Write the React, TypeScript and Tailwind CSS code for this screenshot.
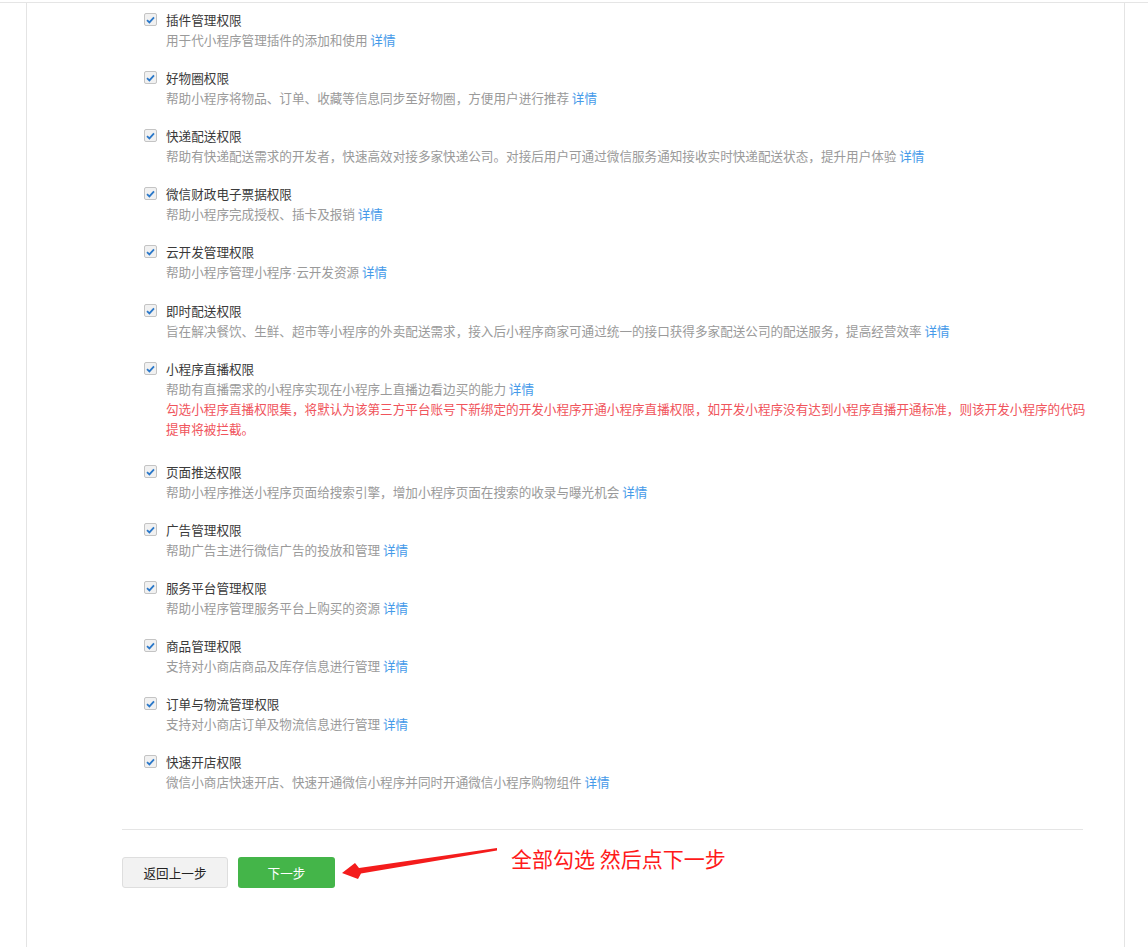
const perms: { title: string; desc: React.ReactNode; warn?: string }[] = [
  { title: "插件管理权限", desc: "用于代小程序管理插件的添加和使用" },
  { title: "好物圈权限", desc: "帮助小程序将物品、订单、收藏等信息同步至好物圈，方便用户进行推荐" },
  {
    title: "快递配送权限",
    desc: "帮助有快递配送需求的开发者，快速高效对接多家快递公司。对接后用户可通过微信服务通知接收实时快递配送状态，提升用户体验",
  },
  { title: "微信财政电子票据权限", desc: "帮助小程序完成授权、插卡及报销" },
  {
    title: "云开发管理权限",
    desc: (
      <>
        帮助小程序管理小程序<span style={{ fontFamily: '"Liberation Sans", sans-serif' }}>·</span>云开发资源
      </>
    ),
  },
  {
    title: "即时配送权限",
    desc: "旨在解决餐饮、生鲜、超市等小程序的外卖配送需求，接入后小程序商家可通过统一的接口获得多家配送公司的配送服务，提高经营效率",
  },
  {
    title: "小程序直播权限",
    desc: "帮助有直播需求的小程序实现在小程序上直播边看边买的能力",
    warn: "勾选小程序直播权限集，将默认为该第三方平台账号下新绑定的开发小程序开通小程序直播权限，如开发小程序没有达到小程序直播开通标准，则该开发小程序的代码提审将被拦截。",
  },
  { title: "页面推送权限", desc: "帮助小程序推送小程序页面给搜索引擎，增加小程序页面在搜索的收录与曝光机会" },
  { title: "广告管理权限", desc: "帮助广告主进行微信广告的投放和管理" },
  { title: "服务平台管理权限", desc: "帮助小程序管理服务平台上购买的资源" },
  { title: "商品管理权限", desc: "支持对小商店商品及库存信息进行管理" },
  { title: "订单与物流管理权限", desc: "支持对小商店订单及物流信息进行管理" },
  { title: "快速开店权限", desc: "微信小商店快速开店、快速开通微信小程序并同时开通微信小程序购物组件" },
];

function Checkbox() {
  return (
    <span className="mt-[3px] flex h-[13px] w-[13px] shrink-0 items-center justify-center rounded-[2px] border border-[#c4c4c4] bg-[#f1f1f1]">
      <svg width="9" height="8" viewBox="0 0 9 8">
        <path d="M1 4.2 L3.4 6.4 L8 1.4" fill="none" stroke="#2b78c9" strokeWidth="1.8" />
      </svg>
    </span>
  );
}

export default function App() {
  return (
    <div
      className="min-h-screen bg-white pt-[2px] text-[12.6px] leading-[20px]"
      style={{ fontFamily: '"Noto Sans CJK SC", "Noto Sans", sans-serif' }}
    >
      <div className="border-t border-[#e5e5e5]">
        <div className="ml-[26px] w-[1099px] min-h-[944px] border-x border-[#e4e4e4] pl-[95px]">
          <div className="w-[961px]">
            <div className="flex flex-col gap-[18px] pt-[7px] pb-[37px]">
              {perms.map((p) => (
                <div key={p.title} className="flex pl-[22px]">
                  <Checkbox />
                  <div className="ml-[9px] min-w-0 flex-1">
                    <div className="text-[#3a3a3a]">{p.title}</div>
                    <div className="text-[#9a9a9a]">
                      {p.desc} <span className="text-[#459ae9]">详情</span>
                    </div>
                    {p.warn && <div className="mb-[5px] w-[925px] text-[#f0545c]">{p.warn}</div>}
                  </div>
                </div>
              ))}
            </div>
            <div className="border-t border-[#e5e5e5]" />
            <div className="mt-[13px] flex items-start">
              <button className="mt-[14px] h-[31px] w-[106px] rounded-[3px] border border-[#dedede] bg-[#f2f2f2] text-[12.6px] text-[#222]">
                返回上一步
              </button>
              <button className="ml-[10px] mt-[14px] h-[31px] w-[97px] rounded-[3px] bg-[#44b549] text-[12.6px] text-white">
                下一步
              </button>
              <svg className="ml-[3px]" width="162" height="40" viewBox="0 0 162 40">
                <polygon points="4,30 17,20 21,25 159,5 159,7.5 23,30.5 20,36" fill="#f41c1c" />
              </svg>
              <span className="ml-[11px] mt-[1px] text-[21px] leading-[28px] text-[#ff1a1a]">全部勾选 然后点下一步</span>
            </div>
          </div>
        </div>
      </div>
    </div>
  );
}
